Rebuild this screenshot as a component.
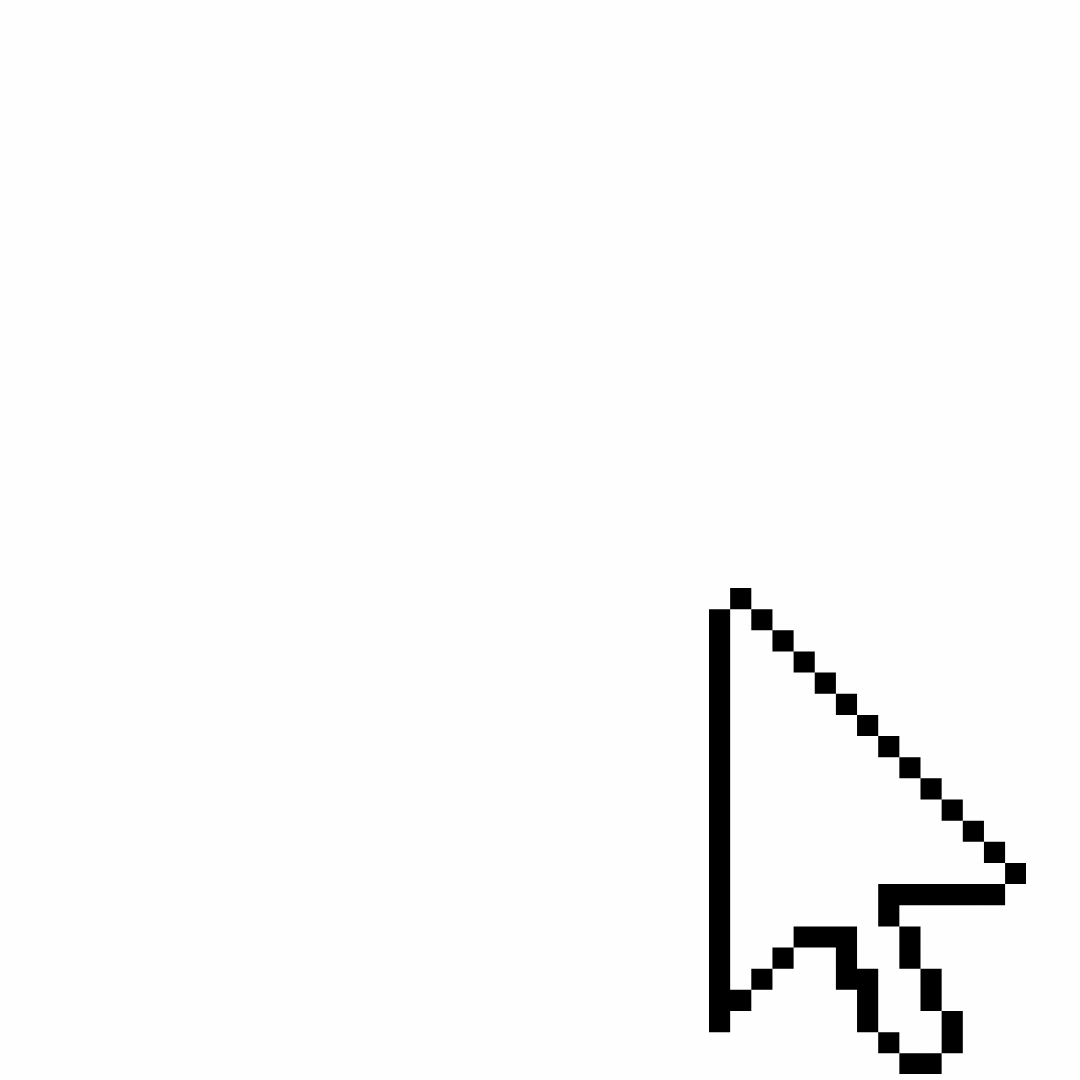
// cursor bitmap, each entry is [col, row] of a black square on the 15x23 grid
const leftEdge = Array.from({ length: 20 }, (_, i) => [0, i + 1]);
const diagonal = Array.from({ length: 14 }, (_, i) => [i + 1, i]);

const cells = [
  ...leftEdge,
  ...diagonal,
  // notch under the arrow head
  [8, 14], [9, 14], [10, 14], [11, 14], [12, 14], [13, 14],
  [8, 15],
  // outer side of the tail
  [9, 16], [9, 17], [10, 18], [10, 19], [11, 20], [11, 21],
  [9, 22], [10, 22],
  // inner side of the tail
  [8, 21], [7, 18], [7, 19], [7, 20], [6, 16], [6, 17], [6, 18],
  [4, 16], [5, 16],
  // back up to the left edge
  [3, 17], [2, 18], [1, 19],
];

const cursorPath = cells.map(([x, y]) => `M${x} ${y}h1v1h-1z`).join('');

export default function App() {
  return (
    <main className="h-[1080px] w-[1080px] overflow-hidden bg-[#fefefe] pl-[708.85px] pt-[588px]">
      <svg
        className="block h-[486.45px] w-[317.25px]"
        viewBox="0 0 15 23"
        fill="#000"
        aria-label="Mouse cursor"
      >
        <path d={cursorPath} />
      </svg>
    </main>
  );
}
